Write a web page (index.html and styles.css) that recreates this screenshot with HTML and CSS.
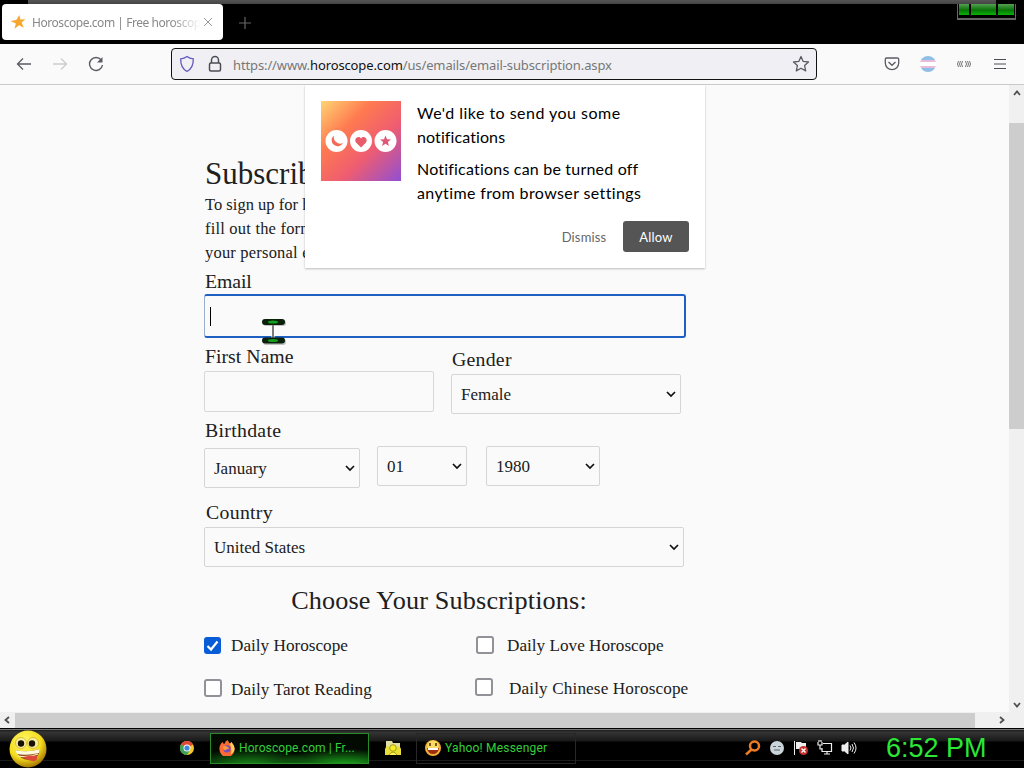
FILE: index.html
```html
<!DOCTYPE html>
<html lang="en">
<head>
  <meta charset="UTF-8" />
  <title>Horoscope.com | Free horoscopes</title>
  <link rel="stylesheet" href="styles.css">
</head>
<body>

<!-- Tabs -->
<div class="tabbar">
  <div class="tab">
    <svg class="tab-icon" width="16" height="16" viewBox="0 0 16 16"><path d="M9.5 1l.8 4.6 5-.3-3.7 3.2 2.2 5.3-4.600-2.600-4.800 3.600 1.500-5.400L.5 7l5.700-1z" fill="#f6a62c"/></svg>
    <span class="tab-title">Horoscope.com | Free horoscop</span>
    <svg class="tab-close" width="10" height="10" viewBox="0 0 10 10"><path d="M1 1l8 8M9 1l-8 8" stroke="#999" stroke-width="1"/></svg>
  </div>
  <svg class="tab-new" width="12" height="12" viewBox="0 0 12 12"><path d="M6 0v12M0 6h12" stroke="#666" stroke-width="1.200"/></svg>
  <div class="window-buttons"><i></i><i class="wide"></i><i class="mid"></i></div>
</div>

<!-- Toolbar -->
<div class="toolbar">
  <svg class="back" width="16" height="16" viewBox="0 0 16 16" fill="none" stroke="#5b5b66" stroke-width="1.300"><path d="M15 8H1.500M7 2.500L1.500 8 7 13.500"/></svg>
  <svg class="forward" width="16" height="16" viewBox="0 0 16 16" fill="none" stroke="#ccc" stroke-width="1.300"><path d="M1 8h13.500M9 2.500L14.500 8 9 13.500"/></svg>
  <svg class="reload" width="16" height="16" viewBox="0 0 16 16" fill="none" stroke="#5b5b66" stroke-width="1.400"><path d="M13.200 4A6.500 6.500 0 1 0 14.500 9"/><path d="M14.500 1v5.500H9z" fill="#5b5b66" stroke="none"/></svg>
  <div class="urlbar">
    <svg class="shield" width="16" height="18" viewBox="0 0 16 18" fill="none" stroke="#6258bd" stroke-width="1.300"><path d="M8 1.500c2 1.600 4 2.200 6.300 2.300.2 5.700-1.300 10-6.300 12.700C3 13.800 1.500 9.500 1.700 3.800 4 3.700 6 3.100 8 1.500z"/></svg>
    <svg class="lock" width="14" height="18" viewBox="0 0 14 18" fill="none" stroke="#4c4c56" stroke-width="1.500"><rect x="1.500" y="8" width="11" height="8" rx="1.500"/><path d="M3.500 8V5a3.500 3.500 0 0 1 7 0v3"/></svg>
    <span class="url">https://www.<b>horoscope.com</b>/us/emails/email-subscription.aspx</span>
    <svg class="star" width="18" height="18" viewBox="0 0 18 18" fill="none" stroke="#5b5b66" stroke-width="1.300" stroke-linejoin="round"><path d="M9 1.500l2.200 4.900 5.300.6-3.900 3.600 1.100 5.300L9 13.200l-4.700 2.700 1.100-5.300L1.500 7l5.300-.6z"/></svg>
  </div>
  <div class="toolbar-icons">
    <svg width="16" height="16" viewBox="0 0 16 16" fill="none" stroke="#5b5b66" stroke-width="1.300"><path d="M2.500 2h11a1.200 1.200 0 0 1 1.200 1.200V7a6.700 6.700 0 0 1-13.400 0V3.200A1.200 1.200 0 0 1 2.500 2z"/><path d="M4.500 6L8 9.300 11.500 6"/></svg>
    <div class="flag"></div>
    <svg width="16" height="8" viewBox="0 0 16 8" fill="none" stroke="#777" stroke-width="1"><path d="M2.500 1q-2 3 0 6M4.500 1q-2 3 0 6M6.500 1q-2 3 0 6M9.500 1q2 3 0 6M11.500 1q2 3 0 6M13.500 1q2 3 0 6"/></svg>
    <svg width="12" height="12" viewBox="0 0 12 12" stroke="#4c4c56" stroke-width="1.200"><path d="M0 1.500h12M0 6h12M0 10.500h12"/></svg>
  </div>
</div>

<div class="viewport">
  <div class="page">
    <h1>Subscribe</h1>
    <p class="intro">To sign up for horoscopes and more,<br>fill out the form below to receive<br>your personal emails.</p>

    <label class="label-email">Email</label>
    <div class="email-box"><input class="field email" type="text"><span class="caret"></span></div>

    <div class="row name-row">
      <div class="col">
        <label>First Name</label>
        <input class="field name" type="text">
      </div>
      <div class="col col-gender">
        <label class="label-gender">Gender</label>
        <div class="select gender"><select><option>Female</option></select><svg width="10" height="7" viewBox="0 0 10 7"><path d="M1 1l4 4 4-4"/></svg></div>
      </div>
    </div>

    <label class="label-birth">Birthdate</label>
    <div class="row birth-row">
      <div class="select month"><select><option>January</option></select><svg width="10" height="7" viewBox="0 0 10 7"><path d="M1 1l4 4 4-4"/></svg></div>
      <div class="select day"><select><option>01</option></select><svg width="10" height="7" viewBox="0 0 10 7"><path d="M1 1l4 4 4-4"/></svg></div>
      <div class="select year"><select><option>1980</option></select><svg width="10" height="7" viewBox="0 0 10 7"><path d="M1 1l4 4 4-4"/></svg></div>
    </div>

    <label class="label-country">Country</label>
    <div class="select country"><select><option>United States</option></select><svg width="10" height="7" viewBox="0 0 10 7"><path d="M1 1l4 4 4-4"/></svg></div>

    <h2>Choose Your Subscriptions:</h2>
    <div class="checks">
      <div class="check"><span class="box checked"><svg width="17" height="17" viewBox="0 0 17 17"><path d="M3.500 9l3.500 3.500 6.500-8" fill="none" stroke="#fff" stroke-width="2.200"/></svg></span><span class="check-text">Daily Horoscope</span></div>
      <div class="check love"><span class="box"></span><span class="check-text">Daily Love Horoscope</span></div>
      <div class="check tarot"><span class="box"></span><span class="check-text">Daily Tarot Reading</span></div>
      <div class="check chinese"><span class="box"></span><span class="check-text">Daily Chinese Horoscope</span></div>
    </div>
  </div>

  <div class="scroll-v">
    <svg width="8" height="6" viewBox="0 0 8 6"><path d="M1 5l3-3.500L7 5"/></svg>
    <div class="thumb-v"></div>
    <svg class="down" width="8" height="6" viewBox="0 0 8 6"><path d="M1 1l3 3.500L7 1"/></svg>
  </div>

  <!-- Notification prompt -->
  <div class="prompt">
    <div class="prompt-body">
      <svg width="80" height="80" viewBox="0 0 80 80">
        <defs><linearGradient id="sunset" x1="0" y1="0" x2="1" y2="1"><stop offset="0" stop-color="#fed573"/><stop offset=".32" stop-color="#ff7a50"/><stop offset=".62" stop-color="#ee5d70"/><stop offset="1" stop-color="#914fd3"/></linearGradient></defs>
        <rect width="80" height="80" fill="url(#sunset)"/>
        <g fill="#fff"><circle cx="15.500" cy="40" r="11"/><circle cx="40" cy="40" r="11"/><circle cx="64.500" cy="40" r="11"/></g>
        <path d="M13 34.500a6.500 6.500 0 0 0 9 7.500A6 6 0 1 1 13 34.500z" fill="#f36b56"/>
        <path d="M40 46.500l-5-5c-2.500-3.500 2.300-8 5-4 2.700-4 7.500.5 5 4z" fill="#e85b69"/>
        <path d="M64.500 34.500l1.500 3.700 4 .3-3.100 2.600 1 3.900-3.400-2.200-3.400 2.200 1-3.900-3.100-2.600 4-.3z" fill="#df5878"/>
      </svg>
      <div class="prompt-text">
        <p class="ask"><span class="line-a">We'd like to send you some</span><br><span class="line-b">notifications</span></p>
        <p><span class="line-c">Notifications can be turned off</span><br><span class="line-d">anytime from browser settings</span></p>
      </div>
    </div>
    <div class="prompt-buttons">
      <button class="dismiss">Dismiss</button>
      <button class="allow">Allow</button>
    </div>
  </div>

  <svg class="cursor" width="28" height="28" viewBox="0 0 28 28">
    <path d="M13 5v17" stroke="#fff" stroke-width="3"/><path d="M13 6v16" stroke="#333" stroke-width="1.300"/>
    <rect x="3" y="3" width="23" height="6" rx="3" fill="#888" opacity=".5"/><rect x="3" y="22" width="23" height="6" rx="3" fill="#888" opacity=".5"/>
    <rect x="2" y="2" width="23" height="6" rx="3" fill="#092009"/><rect x="2" y="20.500" width="23" height="6" rx="3" fill="#092009"/>
    <ellipse cx="13" cy="5" rx="5" ry="1.500" fill="#13a01c"/><ellipse cx="13" cy="23.500" rx="5" ry="1.500" fill="#13a01c"/>
  </svg>
</div>

<div class="scroll-h">
  <svg width="6" height="8" viewBox="0 0 6 8"><path d="M5 1L1.500 4 5 7"/></svg>
  <div class="thumb-h"></div>
  <svg class="right" width="6" height="8" viewBox="0 0 6 8"><path d="M1 1l3.500 3L1 7"/></svg>
</div>

<!-- Taskbar -->
<div class="taskbar">
  <svg class="start" width="38" height="38" viewBox="0 0 38 38">
    <defs><radialGradient id="face" cx=".4" cy=".3" r=".7"><stop offset="0" stop-color="#fff96a"/><stop offset=".65" stop-color="#f5dc1c"/><stop offset="1" stop-color="#a87b05"/></radialGradient></defs>
    <circle cx="19" cy="19" r="18.500" fill="url(#face)"/>
    <g fill="#f7efa0" stroke="#c9a91d" stroke-width=".7"><circle cx="12" cy="13" r="5.500"/><circle cx="24" cy="13" r="5.500"/></g>
    <g fill="#191100"><circle cx="12" cy="13.500" r="3.200"/><circle cx="23" cy="13.500" r="3.200"/></g>
    <path d="M6 20q12 3 25-1-1 9-8 11Q11 31 6 20z" fill="#98501c"/>
    <path d="M6 20q12 3 25-1l-1 4q-12 3-22 1z" fill="#fffbdc"/>
    <path d="M9 26q10 2 20-2" fill="none" stroke="#fff3c2" stroke-width="1.200"/>
    <path d="M14 27q8-2 14-1 1 6-5 5-5-1-9-4z" fill="#dd4a38"/>
  </svg>
  <svg class="chrome" width="14" height="14" viewBox="0 0 14 14"><circle cx="7" cy="7" r="7" fill="#f4c82b"/><path d="M7 7L.9 3.500A7 7 0 0 1 13.100 3.500z" fill="#dc4938"/><path d="M7 7L.9 3.500A7 7 0 0 0 7 14l3-5z" fill="#3ba25a"/><circle cx="7" cy="7" r="3.500" fill="#fff"/><circle cx="7" cy="7" r="2.600" fill="#4285dc"/></svg>
  <div class="task active">
    <svg width="16" height="16" viewBox="0 0 17 17"><path d="M4 2q0 2 2 2Q6.500 1 9 0q0 2 3 4l1-2q4 4 3.500 8a8 8 0 0 1-16 0Q0 5 4 2z" fill="#ff6a35"/><path d="M9 0q0 2 3 4l1-2q4 4 3.500 8-1 4-4 5Q15 8 9 0z" fill="#ffd052"/><circle cx="8.500" cy="9.500" r="3.800" fill="#7650ba"/><path d="M4 7q4-2 7 2-3 0-4 2-3 0-3-4z" fill="#ff9b3b"/></svg>
    <span>Horoscope.com | Fr...</span>
  </div>
  <svg class="folder" width="16" height="16" viewBox="0 0 16 16"><path d="M1 3V1h6l1 2h7v7H1z" fill="#e3dfa4"/><path d="M0 9q1-4 5-2h6q4-2 5 2v6H0z" fill="#e9de38"/><circle cx="8" cy="8" r="3.300" fill="#f9ed28" stroke="#a69b18"/><path d="M4 15q4-6 8 0" fill="#fff35a" stroke="#a69b18"/></svg>
  <div class="task messenger">
    <svg width="16" height="16" viewBox="0 0 16 16"><circle cx="8" cy="8" r="8" fill="#f3b13a"/><circle cx="8" cy="6" r="5.500" fill="#f9dc65"/><path d="M5 3v3M11 3v3" stroke="#4c2808" stroke-width="1.500"/><path d="M2 8h12q-1 6-6 6T2 8z" fill="#9c2d10"/><path d="M3 8h10v2H3z" fill="#fff"/></svg>
    <span>Yahoo! Messenger</span>
  </div>
  <div class="tray">
    <svg width="16" height="16" viewBox="0 0 16 16" fill="none" stroke="#ed7c22" stroke-width="2.500"><circle cx="9.500" cy="6" r="4.500"/><path d="M6.500 9.500L1 14.500"/></svg>
    <svg width="16" height="16" viewBox="-1 -1 16 16"><circle cx="7" cy="7" r="7" fill="#cbd4d8"/><path d="M3 5.500h3M8 5.500h3M4 9h6" stroke="#56636c"/></svg>
    <svg width="16" height="16" viewBox="0 0 16 16"><path d="M1.500 1v14" stroke="#eee"/><path d="M3 2h5l1 1h4v6H3z" fill="#eee"/><circle cx="10.500" cy="10.500" r="4.500" fill="#c82f2c"/><path d="M8.500 8.500l4 4M12.500 8.500l-4 4" stroke="#fff" stroke-width="1.400"/></svg>
    <svg width="16" height="16" viewBox="0 0 16 16" fill="none" stroke="#eee" stroke-width="1.200"><path d="M6 3.500h8.500v8H5V8M7 14h6M10 11v3M1 2v3h4V2M2 0v2M4 0v2M3 5v4h2"/></svg>
    <svg width="16" height="16" viewBox="0 0 16 16" fill="none" stroke="#eee"><path d="M1 5h2.500L7 2v12l-3.500-3H1z" fill="#eee"/><path d="M9 5.500q2 2.500 0 5M11 4q3 4 0 8M13 2.500q4 5.500 0 11"/></svg>
  </div>
  <div class="clock">6:52 PM</div>
</div>

</body>
</html>
```
FILE: styles.css
```css
* { box-sizing: border-box; }
body {
  margin: 0; width: 1024px; height: 768px; overflow: hidden;
  display: flex; flex-direction: column;
  background: #000;
  font-family: "Liberation Serif", serif;
  color: #202020;
}
svg { flex: none; display: block; }
p, h1, h2 { margin: 0; font-weight: normal; }

.tabbar {
  height: 44px; flex: none; display: flex; align-items: flex-start;
  background: linear-gradient(#555, #444) 28px 0 / 968px 4px no-repeat #000;
}
.tab {
  width: 221px; height: 36px; margin: 4px 0 0 2px; padding: 0 11px 0 8px;
  display: flex; align-items: center;
  background: #fff; border-radius: 4px;
}
.tab-title {
  flex: 0 0 168px; margin-left: 6px; white-space: nowrap;
  font: 12px "Noto Sans", sans-serif; letter-spacing: -0.450px; color: #888;
  -webkit-mask-image: linear-gradient(to right, #000 82%, transparent);
  mask-image: linear-gradient(to right, #000 82%, transparent);
}
.tab-close { margin-left: 2px; }
.tab-new { margin: 17px 0 0 16px; }
.window-buttons {
  margin: 4px 8px 0 auto; width: 59px; height: 16px; padding: 0 1px;
  display: flex; gap: 2px;
  border: solid #666; border-width: 0 1px 2px;
}
.window-buttons i { width: 10px; height: 11px; background: linear-gradient(#55a052, #087407 55%, #08b408); }
.window-buttons .wide { width: 25px; }
.window-buttons .mid { width: 16px; }

.toolbar {
  height: 41px; flex: none; display: flex; align-items: center;
  background: #fafafa; border-bottom: 1px solid #cacaca;
}
.back { margin-left: 16px; }
.forward { margin-left: 20px; }
.reload { margin-left: 20px; }
.urlbar {
  width: 646px; height: 32px; margin-left: 67px; padding: 0 6px 0 7px;
  display: flex; align-items: center;
  background: #f0f0f4; border: 1.500px solid #111; border-radius: 4px;
}
.lock { margin-left: 13px; }
.url { margin: 2px 0 0 11px; flex: 1; white-space: nowrap; font: 13px "Noto Sans", sans-serif; letter-spacing: -0.120px; color: #777; }
.url b { font-weight: normal; color: #111; }
.toolbar-icons { margin-left: 67px; display: flex; align-items: center; gap: 20px; }
.flag {
  width: 16px; height: 16px; border-radius: 50%;
  background: linear-gradient(#8fbfe4 25%, #e6bbdc 25% 40%, #fff 40% 60%, #e6bbdc 60% 75%, #8fbfe4 75%);
}
.toolbar-icons svg:last-child { margin-left: 2px; }

.viewport { position: relative; height: 627px; flex: none; display: flex; background: #fafafa; }
.page { flex: 1; padding: 69px 0 0 204px; overflow: hidden; }
h1 { padding-left: 1px; height: 39px; line-height: 40px; font-size: 31px; }
.intro { height: 72px; padding-left: 1px; font-size: 16.500px; letter-spacing: 0.200px; line-height: 24px; white-space: nowrap; }
.intro::first-line { letter-spacing: 0.020px; }
label { display: block; height: 26px; padding-left: 1px; font-size: 19.800px; line-height: 24px; }
.label-email { height: 29px; line-height: 32px; letter-spacing: -0.100px; }
.field { display: block; border: 1px solid #d8d8d8; border-radius: 2px; background: #fafafa; outline: none; }
.email-box { position: relative; width: 482px; height: 44px; }
.email { width: 482px; height: 44px; border: 2px solid #1e5fc4; border-left: 1px solid #9aafcf; border-radius: 3px; }
.caret { position: absolute; left: 6px; top: 13px; width: 1px; height: 19px; background: #000; }
.row { display: flex; }
.name-row { gap: 17px; height: 76px; padding-top: 6px; }
.name { width: 230px; height: 41px; margin-top: 1px; }
.col-gender { padding-top: 3px; }
.label-gender { letter-spacing: 0.250px; }
.select { position: relative; height: 40px; }
.select select {
  appearance: none; display: block; width: 100%; height: 100%; padding: 0 9px;
  border: 1px solid #d5d5d5; border-radius: 2px; background: #fafafa;
  font: 17px "Liberation Serif", serif; color: #202020;
}
.select svg { position: absolute; right: 5px; top: 17px; fill: none; stroke: #111; stroke-width: 1.700; }
.gender { width: 230px; margin-top: 1px; }
.label-birth { margin-top: 4px; letter-spacing: 0.300px; }
.birth-row { height: 56px; padding-top: 2px; }
.month { width: 156px; margin-top: 2px; }
.day { width: 90px; margin-left: 17px; }
.year { width: 114px; margin-left: 19px; }
.label-country { height: 27px; padding-left: 2px; letter-spacing: 0.300px; }
.country { width: 480px; }
h2 { width: 470px; height: 68px; text-align: center; font-size: 26.200px; line-height: 68px; letter-spacing: 0.150px; }
.checks { width: 510px; display: grid; grid-template-columns: 271px 1fr; grid-auto-rows: 42px; }
.check { height: 20px; display: flex; align-items: center; font-size: 17.200px; white-space: nowrap; }
.check-text { padding-top: 2px; }
.box { width: 18px; height: 18px; margin-right: 9px; border: 2px solid #919197; border-radius: 3px; background: #fff; }
.checked { width: 17px; height: 17px; margin-right: 10px; border: 0; background: #085cd5; }
.love { padding-left: 1px; }
.love .box { margin-right: 13px; }
.tarot { margin-top: 1px; letter-spacing: 0.060px; }
.chinese { letter-spacing: 0.120px; }
.tarot .check-text, .chinese .check-text { padding-top: 4px; }
.chinese .box { margin-right: 16px; }

.scroll-v { width: 15px; display: flex; flex-direction: column; align-items: center; padding: 5px 0 4px; background: #f0f0f0; }
.thumb-v { width: 15px; height: 306px; margin-top: 27px; background: #cdcdcd; }
.down { margin-top: auto; }
.scroll-v path, .scroll-h path { fill: none; stroke: #505050; stroke-width: 1.800; }
.scroll-h { height: 16px; flex: none; display: flex; align-items: center; padding: 0 19px 0 4px; background: #f0f0f0; }
.thumb-h { width: 960px; height: 15px; margin-left: 5px; background: #cdcdcd; }
.right { margin-left: auto; }

.prompt {
  position: absolute; left: 305px; top: 0; width: 400px; height: 183px; padding: 16px;
  background: #fff; box-shadow: 0 1px 2px rgba(0,0,0,0.250);
  font-family: Lato, sans-serif; color: #000;
}
.prompt-body { display: flex; gap: 16px; height: 120px; }
.prompt-text { font-size: 16px; line-height: 24px; white-space: nowrap; font-variant-ligatures: none; }
.line-a { letter-spacing: 0.480px; }
.line-b { letter-spacing: 0.100px; }
.line-c { letter-spacing: 0.200px; }
.line-d { letter-spacing: 0.380px; }
.ask { margin-bottom: 8px; }
.prompt-buttons { display: flex; justify-content: flex-end; }
.prompt-buttons button { height: 31px; padding: 0; border: 0; font: 13px Lato, sans-serif; }
.prompt-buttons .dismiss { width: 78px; background: none; color: #666; letter-spacing: 0.150px; }
.prompt-buttons .allow { width: 66px; background: #555; color: #fff; border-radius: 3px; letter-spacing: 0.200px; }
.cursor { position: absolute; left: 260px; top: 232px; }

.taskbar {
  height: 40px; flex: none; display: flex; align-items: center;
  background: linear-gradient(#000 0 1px, #777 1px 2px, #222 2px 3px, #353535 4px, #191919 13px, #000 14px 32px, #1b1b1b 32px 33px, #000 33px);
  font: 12px Roboto, sans-serif; color: #35cf3b;
}
.start { margin-left: 9px; margin-top: 2px; }
.chrome { margin-left: 133px; }
.task { height: 31px; display: flex; align-items: center; gap: 4px; padding-left: 8px; white-space: nowrap; border: 1px solid #272727; }
.active {
  width: 159px; margin-left: 16px; border-color: #278b28; letter-spacing: 0.100px;
  background: radial-gradient(ellipse at 25% 115%, #1b9e1b, transparent 40%), radial-gradient(ellipse at 85% 110%, #1eb51e, transparent 38%), #020a02;
}
.folder { margin-left: 16px; }
.messenger { width: 160px; margin-left: 15px; letter-spacing: 0.200px; }
.tray { display: flex; align-items: center; gap: 8px; margin-left: 169px; }
.clock { margin-left: 29px; font: 27px "Liberation Sans", sans-serif; color: #2be635; white-space: nowrap; }
```
